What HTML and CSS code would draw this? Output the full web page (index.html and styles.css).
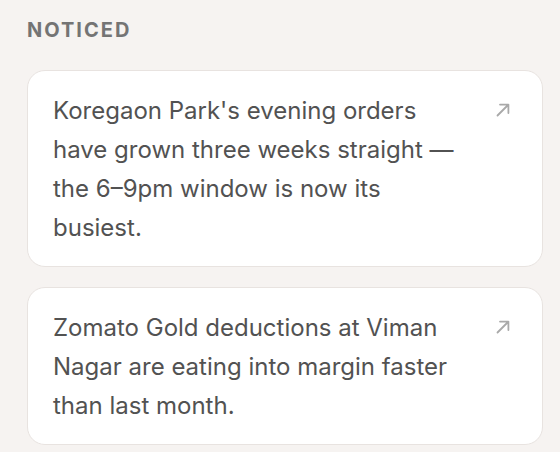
FILE: index.html
```html
<!DOCTYPE html>
<html>
<head>
<meta charset="utf-8">
<link rel="stylesheet" href="styles.css">
</head>
<body>
<section class="panel">
  <h2 class="title">Noticed</h2>
  <div class="list">
    <article class="card">
      <p class="text">Koregaon Park's evening orders have grown three weeks straight — the 6–9pm window is now its busiest.</p>
      <svg class="arrow" viewBox="0 0 18 18" width="18" height="18" aria-hidden="true"><path d="M3.5 14.5 L14 4 M6 3.6 H14.4 V12" fill="none" stroke="currentColor" stroke-width="1.8" stroke-linecap="round" stroke-linejoin="round"/></svg>
    </article>
    <article class="card">
      <p class="text">Zomato Gold deductions at Viman Nagar are eating into margin faster than last month.</p>
      <svg class="arrow" viewBox="0 0 18 18" width="18" height="18" aria-hidden="true"><path d="M3.5 14.5 L14 4 M6 3.6 H14.4 V12" fill="none" stroke="currentColor" stroke-width="1.8" stroke-linecap="round" stroke-linejoin="round"/></svg>
    </article>
  </div>
</section>
</body>
</html>
```
FILE: styles.css
```css
html, body {
  margin: 0;
  padding: 0;
  background: #f6f3f1;
}
body {
  font-family: Inter, "Noto Sans", sans-serif;
  color: #525252;
}
.panel {
  padding: 17px 17px 0 27px;
}
.title {
  margin: 0 0 27px;
  font-size: 20px;
  font-weight: 700;
  letter-spacing: 2px;
  text-transform: uppercase;
  color: #747474;
  line-height: 26px;
}
.list {
  display: flex;
  flex-direction: column;
  gap: 20px;
}
.card {
  display: flex;
  align-items: flex-start;
  background: #ffffff;
  border: 1px solid #e8e3e0;
  border-radius: 18px;
  padding: 20px 30px 19px 25px;
}
.text {
  flex: 1;
  margin: 0;
  font-size: 24px;
  line-height: 39px;
  max-width: 416px;
}
.arrow {
  flex: none;
  margin-top: 10px;
  margin-left: auto;
  color: #a9a9a9;
}
```
